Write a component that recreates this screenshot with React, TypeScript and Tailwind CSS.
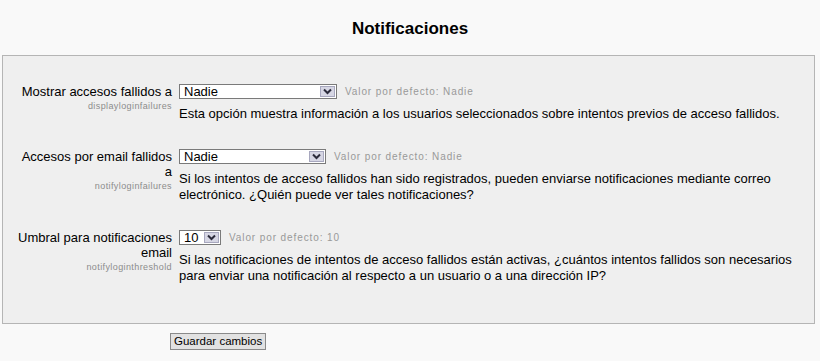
import type React from 'react'

type SettingProps = {
  label: string
  name: string
  value: string
  selectWidth: string
  defaultText: string
  description: string
}

const Chevron: React.FC = () => (
  <svg width="9" height="7" viewBox="0 0 9 7" aria-hidden="true">
    <path d="M1 1.5 L4.5 5 L8 1.5" fill="none" stroke="#2b2b3b" strokeWidth="2" />
  </svg>
)

const Setting: React.FC<SettingProps> = ({
  label,
  name,
  value,
  selectWidth,
  defaultText,
  description,
}) => (
  <div className="flex items-start">
    <div className="w-[159px] shrink-0 text-right">
      <div className="text-[13px] leading-[15px] text-black">{label}</div>
      <div className="text-[9px] leading-[14px] tracking-[0.4px] text-[#8c8c8c]">{name}</div>
    </div>
    <div className="ml-[7px] flex-1">
      <div className="flex items-center h-[15px]">
        <div
          className={`${selectWidth} h-[15px] flex items-center bg-white border border-[#7a7a7a] pl-[4px] pr-[1px]`}
        >
          <span className="flex-1 text-[13px] leading-[13px] text-black">{value}</span>
          <span className="w-[15px] h-[11px] flex items-center justify-center bg-[#d6d6e4] border border-[#a7a7be]">
            <Chevron />
          </span>
        </div>
        <span className="ml-[8px] text-[10px] tracking-[0.9px] text-[#999]">{defaultText}</span>
      </div>
      <p className="mt-[7px] text-[13px] leading-[16px] text-black">{description}</p>
    </div>
  </div>
)

export default function App() {
  return (
    <div className="min-h-[361px] bg-[#f9f9f9] font-['Liberation_Sans',Arial,sans-serif] pt-[19px]">
      <h2 className="text-center text-[17px] leading-[20px] font-bold text-black">Notificaciones</h2>
      <div className="mt-[16px] ml-[2px] mr-[5px] h-[269px] border border-[#b5b5b5] bg-[#efefef] pt-[28px] pl-[10px] pr-[14px] flex flex-col gap-[27px]">
        <Setting
          label="Mostrar accesos fallidos a"
          name="displayloginfailures"
          value="Nadie"
          selectWidth="w-[158px]"
          defaultText="Valor por defecto: Nadie"
          description="Esta opción muestra información a los usuarios seleccionados sobre intentos previos de acceso fallidos."
        />
        <Setting
          label="Accesos por email fallidos a"
          name="notifyloginfailures"
          value="Nadie"
          selectWidth="w-[147px]"
          defaultText="Valor por defecto: Nadie"
          description="Si los intentos de acceso fallidos han sido registrados, pueden enviarse notificaciones mediante correo electrónico. ¿Quién puede ver tales notificaciones?"
        />
        <Setting
          label="Umbral para notificaciones email"
          name="notifyloginthreshold"
          value="10"
          selectWidth="w-[42px]"
          defaultText="Valor por defecto: 10"
          description="Si las notificaciones de intentos de acceso fallidos están activas, ¿cuántos intentos fallidos son necesarios para enviar una notificación al respecto a un usuario o a una dirección IP?"
        />
      </div>
      <div className="pl-[170px] pt-[4px]">
        <button className="h-[17px] px-[3px] border border-[#8a8a8a] bg-[#e2e2e2] text-[11.5px] leading-[13px] text-black">
          Guardar cambios
        </button>
      </div>
    </div>
  )
}
